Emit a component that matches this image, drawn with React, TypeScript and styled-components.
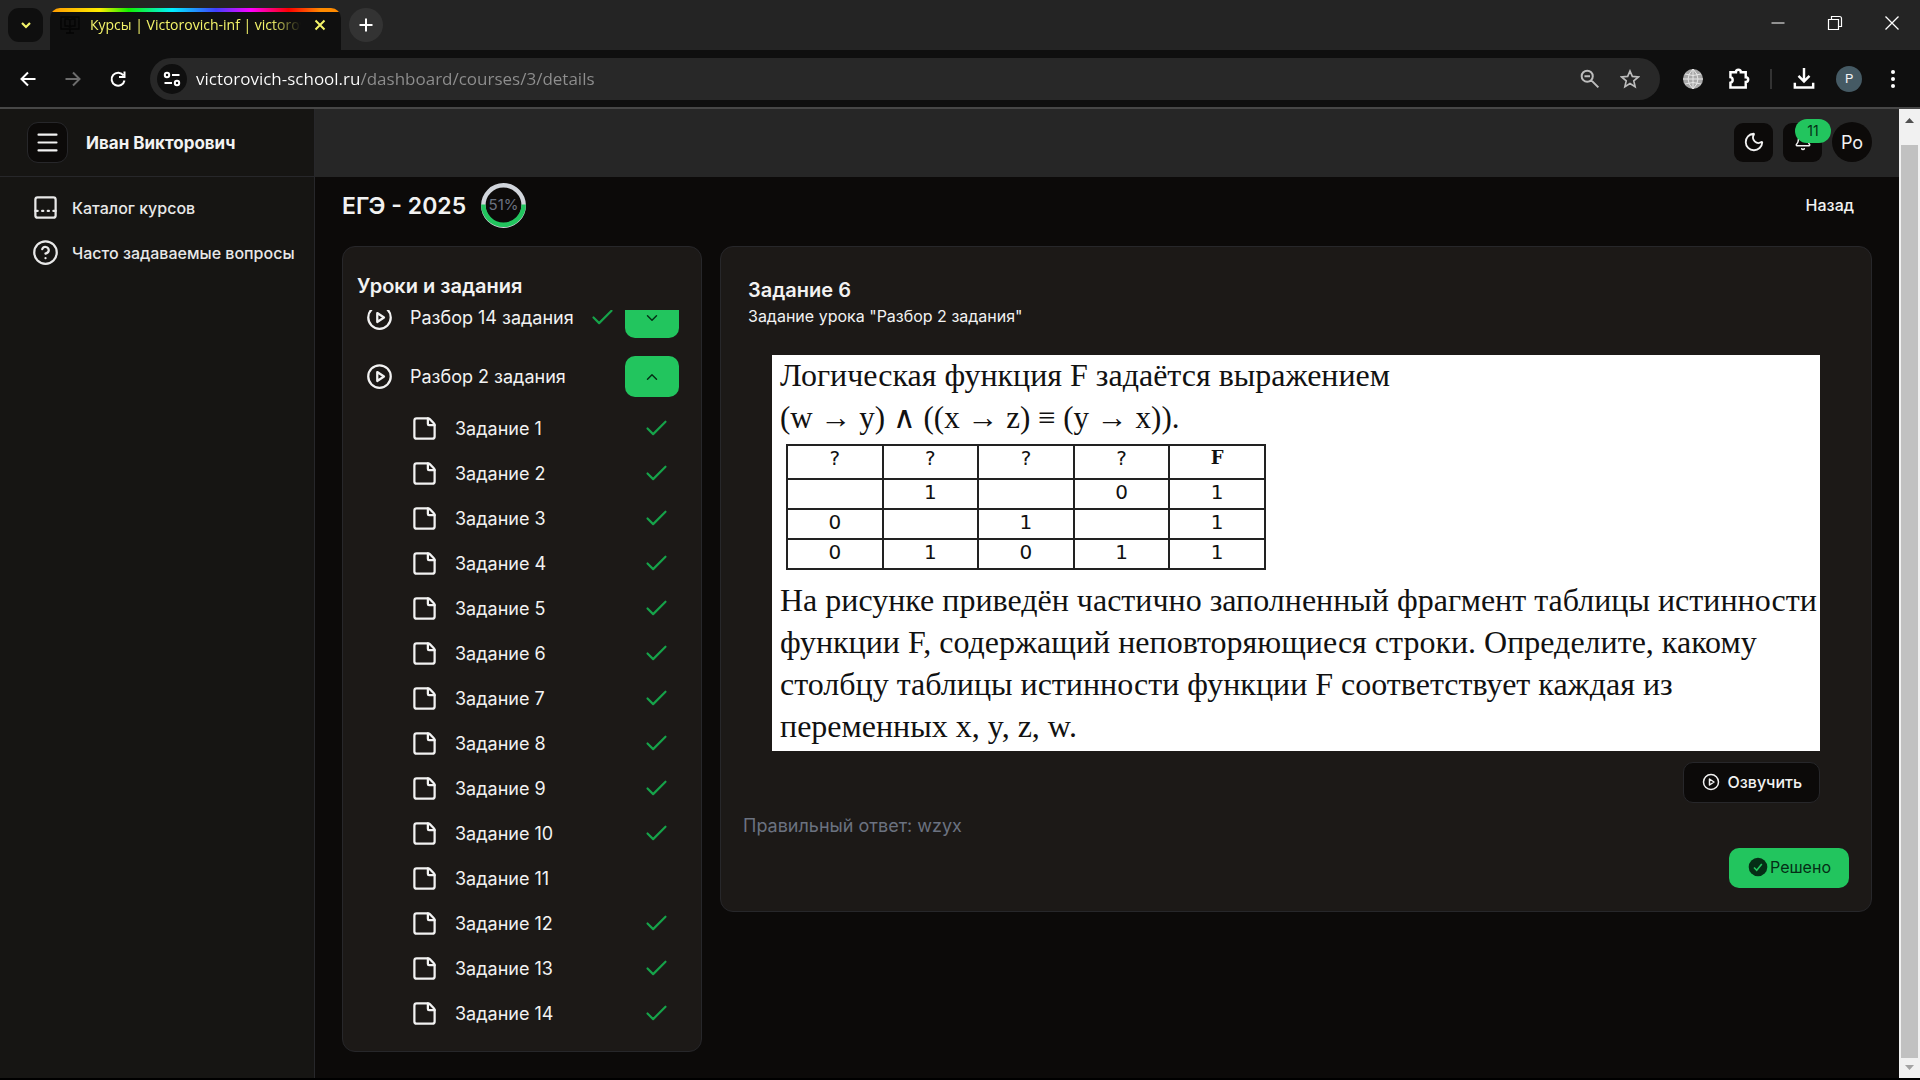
import React from 'react';
import styled, { createGlobalStyle } from 'styled-components';
import {
  Bell,
  Check,
  ChevronDown,
  ChevronUp,
  Menu,
  Moon,
  PanelBottomDashed,
  StickyNote,
} from 'lucide-react';

const ui = `Inter, 'Noto Sans', sans-serif`;
const system = `'Open Sans', 'Noto Sans', sans-serif`;
const green = '#22c55e';
const darkGreen = '#052e16';
const ink = '#0c0a09';
const light = '#f2f2f2';

const GlobalStyle = createGlobalStyle`
  * { box-sizing: border-box; }
  body { margin: 0; background: #000; color: ${light}; font-family: ${ui}; }
  button { font: inherit; color: inherit; border: 0; padding: 0; background: none; cursor: pointer; }
  h1, h2, p, ul { margin: 0; padding: 0; }
  ul { list-style: none; }
  svg { display: block; flex: none; }
`;

const Window = styled.div`
  display: flex;
  flex-direction: column;
  height: 100vh;
  padding-bottom: 2px;
  overflow: hidden;
`;

/* ---------- browser chrome ---------- */

const TabStrip = styled.div`
  display: flex;
  align-items: flex-start;
  height: 50px;
  padding: 8px 0 0 8px;
  background: #242424;
`;

const TabSearch = styled.button`
  display: grid;
  place-items: center;
  width: 35px;
  height: 34px;
  border-radius: 11px;
  background: #0f0f0f;
  color: #f4f46a;
`;

const Tab = styled.div`
  display: flex;
  align-items: center;
  gap: 10px;
  width: 291px;
  height: 42px;
  margin-left: 7px;
  padding: 0 16px 8px 10px;
  border-radius: 10px 10px 0 0;
  background:
    linear-gradient(90deg, #ff9800, #ffee00 17%, #12f000 27%, #00f0ff 42%, #4040ff 57%, #f0f 69%, #f00 82%, #ff8a00 93%) top / 100% 4px no-repeat,
    #0f0f0f;
`;

const TabTitle = styled.span`
  flex: 1;
  overflow: hidden;
  white-space: nowrap;
  font: 400 14px/20px ${system};
  color: #f4f46a;
  mask-image: linear-gradient(90deg, #000 86%, transparent);
`;

const PlainButton = styled.button<{ $w?: number; $color?: string }>`
  display: grid;
  place-items: center;
  width: ${(p) => p.$w ?? 20}px;
  height: 30px;
  color: ${(p) => p.$color ?? '#fff'};
`;

const NewTab = styled.button`
  display: grid;
  place-items: center;
  width: 34px;
  height: 34px;
  margin-left: 8px;
  border-radius: 50%;
  background: #333;
  color: #fff;
`;

const WindowControls = styled.div`
  display: flex;
  margin-left: auto;
`;

const Toolbar = styled.div`
  display: flex;
  align-items: center;
  height: 59px;
  padding: 0 17px 0 18px;
  background: #0f0f0f;
  border-bottom: 2px solid #474747;
`;

const NavButtons = styled.div`
  display: flex;
  gap: 25px;
  margin-right: 22px;
`;

const Omnibox = styled.div`
  display: flex;
  flex: 1;
  align-items: center;
  height: 42px;
  padding-left: 7px;
  border-radius: 21px;
  background: #282828;
`;

const SiteInfo = styled.button`
  display: grid;
  place-items: center;
  width: 30px;
  height: 30px;
  border-radius: 50%;
  background: #0f0f0f;
  color: #fff;
`;

const Address = styled.input`
  flex: 1;
  min-width: 0;
  margin-left: 9px;
  padding: 0;
  border: 0;
  outline: 0;
  font: 400 17px/24px ${system};
  color: #fff;
  -webkit-text-fill-color: transparent;
  background: linear-gradient(90deg, #fff 164px, #8f8f8f 164px);
  background-clip: text;
`;

const Extensions = styled.div`
  display: flex;
  align-items: center;
  margin-left: 18px;
`;

const Divider = styled.span`
  width: 2px;
  height: 20px;
  margin-right: 17px;
  background: #333;
`;

const Profile = styled.button`
  width: 26px;
  height: 26px;
  margin: 0 21px 0 17px;
  border-radius: 50%;
  background: #455a64;
  font: 400 13px/26px Roboto, sans-serif;
`;

/* ---------- site ---------- */

const Page = styled.div`
  display: flex;
  flex: 1;
  min-height: 0;
  background: ${ink};
`;

const Sidebar = styled.aside`
  width: 315px;
  background: #161513;
  border-right: 1px solid #27272a;
`;

const Brand = styled.div`
  display: flex;
  align-items: center;
  gap: 18px;
  height: 68px;
  padding-left: 27px;
  border-bottom: 1px solid #27272a;
  font-size: 17px;
  font-weight: 700;
`;

const MenuButton = styled.button`
  display: grid;
  place-items: center;
  width: 41px;
  height: 41px;
  border: 1px solid #27272a;
  border-radius: 11px;
  background: ${ink};
`;

const SideNav = styled.nav`
  display: flex;
  flex-direction: column;
  padding: 8px 0 0 32px;
`;

const SideLink = styled.a`
  display: flex;
  align-items: center;
  gap: 13px;
  height: 45px;
  color: #e8e8e8;
  font-size: 16px;
  font-weight: 500;
  text-decoration: none;
`;

const Main = styled.main`
  display: flex;
  flex: 1;
  flex-direction: column;
  min-width: 0;
`;

const TopBar = styled.header`
  display: flex;
  align-items: center;
  justify-content: flex-end;
  gap: 10px;
  height: 68px;
  padding: 0 27px 2px 0;
  background: #262626;
`;

const SquareButton = styled.button`
  position: relative;
  display: grid;
  place-items: center;
  width: 39px;
  height: 39px;
  border-radius: 9px;
  background: ${ink};
`;

const Badge = styled.span`
  position: absolute;
  top: -4px;
  left: 12px;
  width: 36px;
  border-radius: 12px;
  background: ${green};
  color: ${darkGreen};
  font-size: 14px;
  line-height: 24px;
  text-align: center;
`;

const UserButton = styled.button`
  width: 40px;
  height: 40px;
  border-radius: 50%;
  background: ${ink};
  font-size: 18px;
`;

const TopActions = styled.div`
  display: flex;
  gap: 10px;
`;

const Content = styled.div`
  display: flex;
  flex: 1;
  flex-direction: column;
  gap: 18px;
  min-height: 0;
  padding: 6px 27px 26px;
`;

const TitleRow = styled.div`
  display: flex;
  align-items: center;
  gap: 15px;
  height: 45px;
`;

const CourseTitle = styled.h1`
  font-size: 23px;
  font-weight: 600;
`;

const BackLink = styled.a`
  margin-left: auto;
  padding: 0 18px 2px 0;
  color: ${light};
  font-size: 16px;
  font-weight: 500;
  text-decoration: none;
`;

const Columns = styled.div`
  display: grid;
  flex: 1;
  grid-template-columns: 360px minmax(0, 1fr);
  gap: 18px;
  min-height: 0;
`;

const Card = styled.section`
  display: flex;
  flex-direction: column;
  border: 1px solid #27272a;
  border-radius: 13px;
  background: #1c1917;
`;

const LessonsCard = styled(Card)`
  min-height: 0;
  padding: 25px 22px 15px 14px;
`;

const TaskCard = styled(Card)`
  align-self: start;
  padding: 29px 22px 23px;
`;

const CardTitle = styled.h2`
  font-size: 20px;
  font-weight: 600;
  line-height: 28px;
`;

const LessonList = styled.ul`
  display: flex;
  flex: 1;
  flex-direction: column;
  justify-content: flex-end;
  min-height: 0;
  margin-top: 10px;
  padding-left: 9px;
  overflow: hidden;
`;

const Lesson = styled.li`
  display: flex;
  flex: none;
  align-items: center;
  height: 59px;
  font-size: 18px;
`;

const ItemName = styled.span`
  margin: 0 auto 0 17px;
`;

const Toggle = styled.button`
  display: grid;
  place-items: center;
  width: 54px;
  height: 41px;
  margin-left: 9px;
  border-radius: 10px;
  background: ${green};
  color: ${darkGreen};
`;

const Task = styled.li`
  display: flex;
  flex: none;
  align-items: center;
  height: 45px;
  padding: 0 9px 0 45px;
  font-size: 18px;
`;

const TaskHeading = styled.div`
  padding: 0 5px;
`;

const Subtitle = styled.p`
  font-size: 16px;
  line-height: 24px;
`;

const Statement = styled.div`
  margin: 27px 29px 0;
  padding: 0 0 4px 8px;
  background: #fff;
  color: #111;
  font: 400 32px/41px 'Liberation Serif', serif;
`;

const Formula = styled.p`
  font-size: 31px;
  line-height: 44px;
`;

const Question = styled.p`
  line-height: 42px;
`;

const TruthTable = styled.table`
  width: 480px;
  margin: 4px 0 9px 6px;
  border-collapse: collapse;
  table-layout: fixed;
  font: 400 20px/24px 'DejaVu Sans', sans-serif;
  text-align: center;

  th, td {
    height: 30px;
    padding: 0 0 4px;
    border: 2px solid #222;
    font-weight: 400;
  }
  th { height: 34px; padding-bottom: 8px; }
  th:last-child { font: 700 18px/24px 'DejaVu Serif', serif; }
`;

const SpeakButton = styled.button`
  display: flex;
  align-items: center;
  align-self: flex-end;
  gap: 8px;
  height: 41px;
  margin: 11px 29px 0 0;
  padding: 0 17px 2px 18px;
  border: 1px solid #27272a;
  border-radius: 10px;
  background: ${ink};
  font-size: 16px;
  font-weight: 500;
`;

const Answer = styled.p`
  margin: 9px 0 8px;
  color: #6b7280;
  font-size: 18px;
  line-height: 28px;
`;

const SolvedButton = styled.button`
  display: flex;
  align-items: center;
  align-self: flex-end;
  gap: 2px;
  height: 40px;
  padding: 0 18px 2px 19px;
  border-radius: 10px;
  background: ${green};
  color: ${darkGreen};
  font-size: 16px;
`;

const ScrollTrack = styled.div`
  display: flex;
  flex-direction: column;
  width: 21px;
  padding: 0 2px;
  background: #f1f1f1;
`;

const ScrollArrow = styled.button<{ $h: number; $up?: boolean }>`
  display: flex;
  align-items: flex-start;
  justify-content: center;
  height: ${(p) => p.$h}px;
  padding-top: ${(p) => (p.$up ? 9 : 7)}px;
  color: ${(p) => (p.$up ? '#505050' : '#a3a3a3')};
`;

const ScrollThumb = styled.div`
  flex: 1;
  background: #c1c1c1;
`;

/* ---------- drawings ---------- */

const PlayIcon = ({ size }: { size: number }) => (
  <svg width={size} height={size} viewBox="0 0 24 24" fill="none" stroke="currentColor" strokeWidth="2" strokeLinejoin="round">
    <circle cx="12" cy="12" r="10" />
    <path d="M10 8l6 4-6 4z" />
  </svg>
);

const HelpIcon = () => (
  <svg width="27" height="27" viewBox="0 0 24 24" fill="none" stroke="currentColor" strokeWidth="2" strokeLinecap="round">
    <circle cx="12" cy="12" r="10" />
    <path d="M9.1 9a3 3 0 0 1 5.8 1c0 2-2.9 3-2.9 3M12 17h.01" />
  </svg>
);

const Ring = () => (
  <svg width="45" height="45" viewBox="0 0 45 45" role="img" aria-label="51%">
    <circle cx="22.5" cy="22.5" r="20.2" fill="none" stroke="#d1d5db" strokeWidth="4.5" />
    <path d="M2.3 21.6a20.2 20.2 0 1 0 40.4 0" fill="none" stroke={green} strokeWidth="4.5" />
    <text x="22.5" y="26.5" textAnchor="middle" fill="#6b7280" fontFamily="Inter, sans-serif" fontSize="15">51%</text>
  </svg>
);

const Line = ({ d, w = 18, sw = 2 }: { d: string; w?: number; sw?: number }) => (
  <svg width={w} height={w} viewBox="0 0 18 18" fill="none" stroke="currentColor" strokeWidth={sw}>
    <path d={d} />
  </svg>
);

const TuneIcon = () => (
  <svg width="18" height="18" viewBox="0 0 18 18" fill="none" stroke="currentColor" strokeWidth="2">
    <circle cx="4" cy="5" r="2.2" />
    <circle cx="14" cy="13" r="2.2" />
    <path d="M9 5h7.500M1.500 13H9" />
  </svg>
);

const GlobeIcon = () => (
  <svg width="20" height="20" viewBox="0 0 20 20">
    <circle cx="10" cy="10" r="10" fill="#a8a8a8" />
    <path d="M10 0v20M0 10h20M2 5q8 3 16 0M2 15q8-3 16 0M10 0Q0 10 10 20Q20 10 10 0" fill="none" stroke="#e6e6e6" strokeWidth="1" />
  </svg>
);

const FaviconIcon = () => (
  <svg width="20" height="20" viewBox="0 0 20 20" fill="none" stroke="#050505" strokeWidth="1.6">
    <path d="M1 2h18v12H1zM6 18h8M10 14v4M10 5v7M5 4h3l2 1 2-1h3v7h-3l-2 1-2-1H5z" />
  </svg>
);

const DoneMark = () => <Check size={27} strokeWidth={1.9} color="#16a34a" />;

/* ---------- data ---------- */

const tasks = Array.from({ length: 14 }, (_, i) => ({ name: `Задание ${i + 1}`, done: i !== 10 }));

const columns = ['?', '?', '?', '?', 'F'];

const rows = [
  ['', '1', '', '0', '1'],
  ['0', '', '1', '', '1'],
  ['0', '1', '0', '1', '1'],
];

function Browser() {
  return (
    <>
      <TabStrip>
        <TabSearch aria-label="Поиск вкладок">
          <Line d="M5 7l4 4 4-4" sw={2.2} />
        </TabSearch>
        <Tab>
          <FaviconIcon />
          <TabTitle>Курсы | Victorovich-inf | victorovich</TabTitle>
          <PlainButton aria-label="Закрыть вкладку" $w={14} $color="#f4f46a">
            <Line d="M4.500 4.500l9 9M13.500 4.500l-9 9" />
          </PlainButton>
        </Tab>
        <NewTab aria-label="Новая вкладка">
          <Line d="M9 2.500v13M2.500 9h13" />
        </NewTab>
        <WindowControls>
          <PlainButton $w={57} aria-label="Свернуть">
            <Line d="M2.500 9h13" sw={1} />
          </PlainButton>
          <PlainButton $w={57} aria-label="Окно">
            <Line d="M2.500 5.500h10v10h-10zM5.500 5V2.500h8q2 0 2 2v8H13" sw={1.2} />
          </PlainButton>
          <PlainButton $w={57} aria-label="Закрыть">
            <Line d="M2.500 2.500l13 13M15.500 2.500l-13 13" sw={1.3} />
          </PlainButton>
        </WindowControls>
      </TabStrip>
      <Toolbar>
        <NavButtons>
          <PlainButton aria-label="Назад на страницу">
            <Line d="M16.500 9H3M9 2.500L2.500 9 9 15.500" />
          </PlainButton>
          <PlainButton aria-label="Вперёд" $color="#6c6c6c">
            <Line d="M1.500 9H15M9 2.500L15.500 9 9 15.500" />
          </PlainButton>
          <PlainButton aria-label="Обновить">
            <Line d="M14.500 5.500A6.500 6.500 0 1 0 15.500 10.500M15.500 1.500v5.500H10" />
          </PlainButton>
        </NavButtons>
        <Omnibox>
          <SiteInfo aria-label="Сведения о сайте">
            <TuneIcon />
          </SiteInfo>
          <Address aria-label="Адрес" defaultValue="victorovich-school.ru/dashboard/courses/3/details" />
          <PlainButton $w={20} $color="#bdbdbd" aria-label="Масштаб">
            <Line w={20} d="M11.500 6.500a5 5 0 1 1-10 0a5 5 0 1 1 10 0M10 10l6.500 6.500M4 6.500h5" sw={1.8} />
          </PlainButton>
          <PlainButton $w={60} $color="#bdbdbd" aria-label="В закладки">
            <Line w={20} d="M9 1.800l2.100 4.900 5.400.5-4.100 3.500 1.200 5.200L9 13.100l-4.600 2.800 1.200-5.200L1.500 7.200l5.400-.5z" sw={1.5} />
          </PlainButton>
        </Omnibox>
        <Extensions>
          <PlainButton $w={30} aria-label="Расширение">
            <GlobeIcon />
          </PlainButton>
          <PlainButton $w={62} aria-label="Расширения">
            <Line w={22} d="M2 3.500h4.500a2 2 0 0 1 4 0h4v4a2 2 0 0 1 0 4v4.500H2V12a2.300 2.300 0 0 0 0-4.500z" />
          </PlainButton>
          <Divider />
          <PlainButton $w={30} aria-label="Загрузки">
            <Line w={22} d="M9 0v10.500M4.500 6.500L9 11l4.500-4.500M1.500 12v4h15v-4" />
          </PlainButton>
          <Profile>P</Profile>
          <PlainButton $w={20} aria-label="Меню браузера">
            <svg width="6" height="20" viewBox="0 0 6 20" fill="currentColor">
              <circle cx="3" cy="3" r="2" />
              <circle cx="3" cy="10" r="2" />
              <circle cx="3" cy="17" r="2" />
            </svg>
          </PlainButton>
        </Extensions>
      </Toolbar>
    </>
  );
}

export default function App() {
  return (
    <Window>
      <GlobalStyle />
      <Browser />
      <Page>
        <Sidebar>
          <Brand>
            <MenuButton aria-label="Меню">
              <Menu size={27} strokeWidth={1.9} />
            </MenuButton>
            <span>Иван Викторович</span>
          </Brand>
          <SideNav>
            <SideLink href="#catalog">
              <PanelBottomDashed size={27} strokeWidth={2} />
              <span>Каталог курсов</span>
            </SideLink>
            <SideLink href="#faq">
              <HelpIcon />
              <span>Часто задаваемые вопросы</span>
            </SideLink>
          </SideNav>
        </Sidebar>
        <Main>
          <TopBar>
            <TopActions>
              <SquareButton aria-label="Тема">
                <Moon size={22} strokeWidth={2} />
              </SquareButton>
              <SquareButton aria-label="Уведомления">
                <Bell size={18} strokeWidth={2} />
                <Badge>11</Badge>
              </SquareButton>
            </TopActions>
            <UserButton>Ро</UserButton>
          </TopBar>
          <Content>
            <TitleRow>
              <CourseTitle>ЕГЭ - 2025</CourseTitle>
              <Ring />
              <BackLink href="#back">Назад</BackLink>
            </TitleRow>
            <Columns>
              <LessonsCard>
                <CardTitle>Уроки и задания</CardTitle>
                <LessonList>
                  <Lesson>
                    <PlayIcon size={27} />
                    <ItemName>Разбор 14 задания</ItemName>
                    <DoneMark />
                    <Toggle aria-label="Развернуть урок">
                      <ChevronDown size={18} strokeWidth={1.9} />
                    </Toggle>
                  </Lesson>
                  <Lesson>
                    <PlayIcon size={27} />
                    <ItemName>Разбор 2 задания</ItemName>
                    <Toggle aria-label="Свернуть урок">
                      <ChevronUp size={18} strokeWidth={1.9} />
                    </Toggle>
                  </Lesson>
                  {tasks.map((t) => (
                    <Task key={t.name}>
                      <StickyNote size={27} strokeWidth={2} />
                      <ItemName>{t.name}</ItemName>
                      {t.done && <DoneMark />}
                    </Task>
                  ))}
                </LessonList>
              </LessonsCard>
              <TaskCard>
                <TaskHeading>
                  <CardTitle>Задание 6</CardTitle>
                  <Subtitle>Задание урока "Разбор 2 задания"</Subtitle>
                </TaskHeading>
                <Statement>
                  <p>Логическая функция F задаётся выражением</p>
                  <Formula>(w → y) ∧ ((x → z) ≡ (y → x)).</Formula>
                  <TruthTable>
                    <thead>
                      <tr>
                        {columns.map((c, i) => (
                          <th key={i}>{c}</th>
                        ))}
                      </tr>
                    </thead>
                    <tbody>
                      {rows.map((r, i) => (
                        <tr key={i}>
                          {r.map((c, j) => (
                            <td key={j}>{c}</td>
                          ))}
                        </tr>
                      ))}
                    </tbody>
                  </TruthTable>
                  <Question>
                    На рисунке приведён частично заполненный фрагмент таблицы истинности функции F,
                    содержащий неповторяющиеся строки. Определите, какому столбцу таблицы истинности
                    функции F соответствует каждая из переменных x, y, z, w.
                  </Question>
                </Statement>
                <SpeakButton>
                  <PlayIcon size={18} />
                  Озвучить
                </SpeakButton>
                <Answer>Правильный ответ: wzyx</Answer>
                <SolvedButton>
                  <svg width="20" height="20" viewBox="0 0 20 20" fill="none">
                    <circle cx="10" cy="10" r="9.300" fill={darkGreen} />
                    <path d="M6 10.500l2.700 2.700L13.800 7" stroke={green} strokeWidth="1.600" />
                  </svg>
                  Решено
                </SolvedButton>
              </TaskCard>
            </Columns>
          </Content>
        </Main>
        <ScrollTrack>
          <ScrollArrow $h={36} $up aria-label="Вверх">
            <svg width="9" height="5" viewBox="0 0 9 5" fill="currentColor"><path d="M0 5L4.500 0 9 5z" /></svg>
          </ScrollArrow>
          <ScrollThumb />
          <ScrollArrow $h={20} aria-label="Вниз">
            <svg width="9" height="5" viewBox="0 0 9 5" fill="currentColor"><path d="M0 0l4.500 5L9 0z" /></svg>
          </ScrollArrow>
        </ScrollTrack>
      </Page>
    </Window>
  );
}
